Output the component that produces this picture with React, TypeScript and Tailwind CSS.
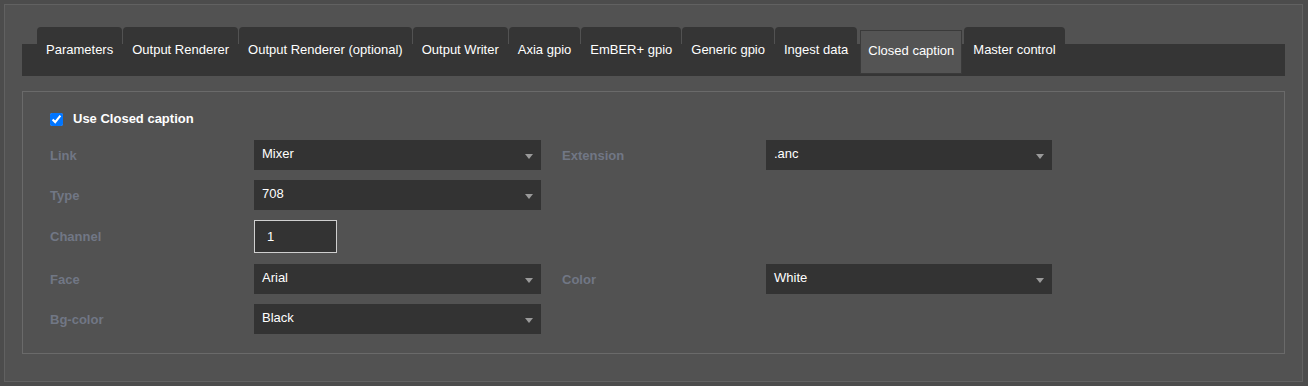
import React from 'react';

const tabs = [
  'Parameters',
  'Output Renderer',
  'Output Renderer (optional)',
  'Output Writer',
  'Axia gpio',
  'EmBER+ gpio',
  'Generic gpio',
  'Ingest data',
  'Closed caption',
  'Master control',
];

const activeTab = 'Closed caption';

const Select: React.FC<{ value: string; className?: string }> = ({ value, className = '' }) => (
  <div className={`flex h-[30px] items-center justify-between bg-[#333333] pl-[8px] pr-[8px] ${className}`}>
    <span className="pb-[3px] text-[13px] leading-[15px] text-white">{value}</span>
    <span className="mt-[3px] h-0 w-0 border-l-[4px] border-r-[4px] border-t-[5px] border-l-transparent border-r-transparent border-t-[#9a9a9a]" />
  </div>
);

const Label: React.FC<{ text: string }> = ({ text }) => (
  <div className="w-[204px] shrink-0 text-[13px] font-bold leading-[15px] text-[#717785]">{text}</div>
);

export default function App() {
  return (
    <div className="min-h-[386px] bg-[#4c4c4c] pl-[4px] pt-[4px] font-['Liberation_Sans',Arial,sans-serif]">
      <div className="w-[1299px] border border-[#616161] bg-[#525252] px-[17px] pb-[27px] pt-[22px]">
        {/* tab bar */}
        <div className="flex h-[49px] items-start bg-[linear-gradient(to_bottom,transparent_17px,#353535_17px)] pl-[15px]">
          {tabs.map((tab) =>
            tab === activeTab ? (
              <div
                key={tab}
                className="ml-[2px] mr-[2px] mt-[3px] h-[44px] border border-[#3a3a3a] bg-[#545454] px-[7px] pt-[12px] text-[13px] leading-[16px] text-white"
              >
                {tab}
              </div>
            ) : (
              <div
                key={tab}
                className="mr-[1px] h-[49px] rounded-t-[4px] bg-[#353535] px-[9px] pt-[15px] text-[13px] leading-[15px] text-white"
              >
                {tab}
              </div>
            )
          )}
        </div>

        {/* form */}
        <div className="mt-[15px] border border-[#6a6a6a] pb-[19px] pl-[27px] pt-[18px]">
          <label className="flex h-[18px] items-center gap-[10px]">
            <input type="checkbox" defaultChecked className="m-0 h-[13px] w-[13px] accent-[#0075ff]" />
            <span className="text-[13px] font-bold text-white">Use Closed caption</span>
          </label>

          <div className="mt-[12px] flex flex-col gap-[10px]">
            <div className="flex items-center">
              <Label text="Link" />
              <Select value="Mixer" className="w-[287px]" />
              <div className="w-[21px]" />
              <Label text="Extension" />
              <Select value=".anc" className="w-[286px]" />
            </div>
            <div className="flex items-center">
              <Label text="Type" />
              <Select value="708" className="w-[287px]" />
            </div>
            <div className="flex h-[34px] items-start">
              <div className="flex h-[33px] items-center">
                <Label text="Channel" />
              </div>
              <div className="flex h-[33px] w-[83px] items-center border border-[#cfcfcf] bg-[#333333] pl-[12px] text-[13px] text-white">
                1
              </div>
            </div>
            <div className="flex items-center">
              <Label text="Face" />
              <Select value="Arial" className="w-[287px]" />
              <div className="w-[21px]" />
              <Label text="Color" />
              <Select value="White" className="w-[286px]" />
            </div>
            <div className="flex items-center">
              <Label text="Bg-color" />
              <Select value="Black" className="w-[287px]" />
            </div>
          </div>
        </div>
      </div>
    </div>
  );
}
